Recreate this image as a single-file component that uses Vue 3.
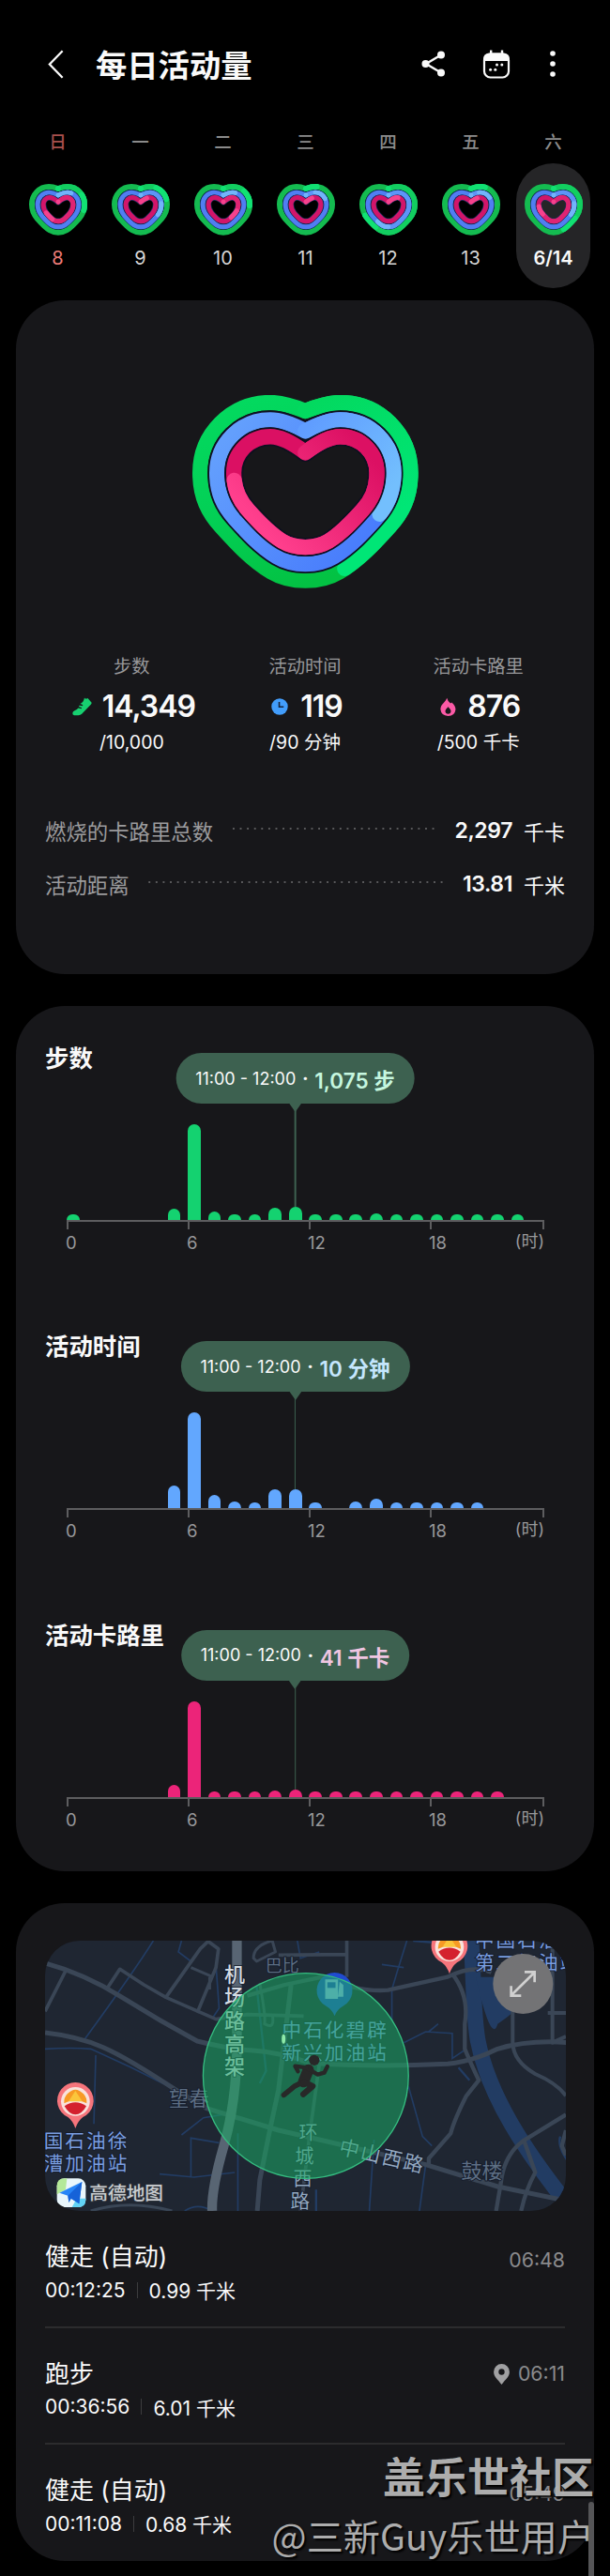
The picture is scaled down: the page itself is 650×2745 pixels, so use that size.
<template>
  <div class="DailyPage">
    <header class="TopBar">
      <svg class="IconBack" viewBox="0 0 20 34"><path d="M17.5 2 3 17 17.5 32" /></svg>
      <h1>每日活动量</h1>
      <svg class="IconShare" viewBox="0 0 26 28">
        <path d="M21 4.5 5 14l16 9.5" />
        <circle cx="21" cy="4.5" r="4" /><circle cx="4.5" cy="14" r="4" /><circle cx="21" cy="23.5" r="4" />
      </svg>
      <svg class="IconCalendar" viewBox="0 0 30 31">
        <rect x="2" y="4.5" width="26" height="25" rx="6.5" class="frame" />
        <path d="M1 12V10Q1 3.5 8 3.5H22Q29 3.5 29 10V12Z" />
        <rect x="8" y="0.5" width="2.4" height="6" /><rect x="19.8" y="0.5" width="2.4" height="6" />
        <circle cx="15.5" cy="16" r="1.5" /><circle cx="20.8" cy="16" r="1.5" />
        <circle cx="8.6" cy="21.3" r="1.5" /><circle cx="13.8" cy="21.3" r="1.5" />
      </svg>
      <svg class="IconMore" viewBox="0 0 6 28"><circle cx="3" cy="3" r="2.8" /><circle cx="3" cy="14" r="2.8" /><circle cx="3" cy="25" r="2.8" /></svg>
    </header>

    <div class="WeekBar">
      <div class="WeekDay" v-for="(day, dayIndex) in arrayWeek" v-bind:key="'Day-' + dayIndex"
      v-bind:class="{ isSunday: dayIndex == 0, isActive: dayIndex == numCurrentDay }" v-on:click="numCurrentDay = dayIndex">
        <p class="WeekName">{{ day.name }}</p>
        <div class="WeekPill">
          <svg class="SmallHeart" viewBox="90 77 187 166" preserveAspectRatio="none">
            <g v-for="(ring, ringIndex) in arraySmallRing" v-bind:key="'Ring-' + ringIndex">
              <path v-bind:d="ring.d" class="ringEdge" v-bind:stroke-width="ring.width + 4" />
              <path v-bind:d="ring.d" v-bind:stroke="ring.base" v-bind:stroke-width="ring.width" />
              <path v-bind:d="ring.d" v-bind:stroke="ring.mid" v-bind:stroke-width="ring.width" pathLength="100"
              v-bind:stroke-dasharray="day.rings[ringIndex] + ' 200'" stroke-linecap="round" />
              <path v-bind:d="ring.d" v-bind:stroke="ring.head" v-bind:stroke-width="ring.width" pathLength="100"
              v-bind:stroke-dasharray="getHeadDash(day.rings[ringIndex])" stroke-linecap="round" />
            </g>
          </svg>
          <span class="WeekDate">{{ day.date }}</span>
        </div>
      </div>
    </div>

    <section class="Card CardSummary">
      <svg class="BigHeart" viewBox="105 93 723 619">
        <defs>
          <linearGradient id="greenBase" gradientUnits="userSpaceOnUse" x1="300" y1="100" x2="460" y2="700"><stop offset="0" stop-color="#03d95f" /><stop offset="0.55" stop-color="#03cf55" /><stop offset="1" stop-color="#03c243" /></linearGradient>
          <linearGradient id="greenTop" gradientUnits="userSpaceOnUse" x1="466" y1="130" x2="720" y2="500"><stop offset="0" stop-color="#03d95f" /><stop offset="1" stop-color="#00e676" /></linearGradient>
          <linearGradient id="blueBase" gradientUnits="userSpaceOnUse" x1="200" y1="250" x2="640" y2="600"><stop offset="0" stop-color="#639ffd" /><stop offset="1" stop-color="#487cfc" /></linearGradient>
          <linearGradient id="blueTop" gradientUnits="userSpaceOnUse" x1="466" y1="200" x2="720" y2="420"><stop offset="0" stop-color="#609dff" /><stop offset="1" stop-color="#73bffd" /></linearGradient>
          <linearGradient id="pinkTop" gradientUnits="userSpaceOnUse" x1="640" y1="250" x2="330" y2="520"><stop offset="0" stop-color="#dc1063" /><stop offset="1" stop-color="#ff3f8d" /></linearGradient>
        </defs>
        <g v-for="(ring, ringIndex) in arrayBigRing" v-bind:key="'Big-' + ringIndex">
          <path v-bind:d="ring.d" class="ringEdge" stroke-width="60" />
          <path v-bind:d="ring.d" v-bind:stroke="ring.base" stroke-width="49" />
          <path v-bind:d="ring.d" v-bind:stroke="ring.top" stroke-width="49" pathLength="100"
          v-bind:stroke-dasharray="ring.percent + ' 200'" stroke-linecap="round" />
        </g>
      </svg>

      <div class="StatRow">
        <div class="StatItem">
          <p class="StatName">步数</p>
          <p class="StatValue">
            <svg class="IconStat shoe" viewBox="0 0 21 20">
              <path d="M13 .4Q14.2 2.4 16.5 1L20.6 5.8Q20.8 6.8 19.8 7.8L10.2 17.8Q8.8 19.2 6.5 19.3H2Q.2 19.1.3 17Q.5 14.8 2.5 14.2Q5.2 13.4 6.4 11.6L9.8 12.3 10 11.2 7 10.1 7.6 8.8 11 9.2 11.2 8.1 8.4 6.9Q12 5.4 13 .4Z" fill="#17d070" />
            </svg>14,349
          </p>
          <p class="StatTarget">/10,000</p>
        </div>
        <div class="StatItem">
          <p class="StatName">活动时间</p>
          <p class="StatValue">
            <svg class="IconStat clock" viewBox="0 0 19 19"><circle cx="9.5" cy="9.5" r="9.2" fill="#429dfb" /><path d="M9 4.2V9.8H14" fill="none" stroke="#15233c" stroke-width="1.7" /></svg>119
          </p>
          <p class="StatTarget">/90 分钟</p>
        </div>
        <div class="StatItem">
          <p class="StatName">活动卡路里</p>
          <p class="StatValue">
            <svg class="IconStat flame" viewBox="0 0 18 21">
              <path d="M7.6.3Q8.4 3.6 11.4 6Q12.2 6.4 12.9 5.2Q17.6 9 17.4 13.3Q16.6 20.3 9 20.6Q1 20.2.4 13Q.4 9 4.2 5.6Q6.9 3.2 7.6.3ZM9 10.2Q6 13 5.8 15Q6 18 9 18.2Q12 18 12.2 15Q12 13 9 10.2Z" fill="#fb5aa6" fill-rule="evenodd" />
            </svg>876
          </p>
          <p class="StatTarget">/500 千卡</p>
        </div>
      </div>

      <div class="TotalRow" v-for="item in arrayTotal" v-bind:key="item.name">
        <span class="TotalName">{{ item.name }}</span>
        <i class="TotalDots"></i>
        <b class="TotalValue">{{ item.value }}</b>
        <span class="TotalUnit">{{ item.unit }}</span>
      </div>
    </section>

    <section class="Card CardChart">
      <div class="ChartItem" v-for="chart in arrayChart" v-bind:key="chart.name">
        <h2>{{ chart.name }}</h2>
        <div class="ChartPlot">
          <i class="ChartBar" v-for="(numHeight, hour) in chart.bars" v-bind:key="chart.name + hour"
          v-bind:style="{ height: numHeight + 'px', backgroundColor: chart.color }"></i>
        </div>
        <div class="ChartTicks"><i v-for="numTick in 5" v-bind:key="'Tick-' + numTick"></i></div>
        <div class="ChartLabels"><span>0</span><span>6</span><span>12</span><span>18</span><span class="hourUnit">(时)</span></div>
        <div class="ChartTip">
          <span class="TipRange">11:00 - 12:00</span><span class="TipDot">·</span><b v-bind:style="{ color: chart.tipColor }">{{ chart.tip }}</b>
          <i class="TipLine" v-bind:style="{ height: 124 - chart.bars[11] + 'px' }"></i>
        </div>
      </div>
    </section>

    <section class="Card CardRecord">
      <div class="MapBox">
        <svg class="MapCanvas" viewBox="54 84 1664 864" preserveAspectRatio="none">
          <rect x="54" y="84" width="1664" height="864" fill="#1f2632" />
          <!-- 河道 -->
          <g fill="none" stroke="#223c63">
            <path d="M1415 84C1425 200 1420 300 1436 400 C1470 580 1590 760 1730 935" stroke-width="50" />
            <path d="M1430 200Q1480 420 1500 350Q1560 310 1600 260V200Z" fill="#223c63" stroke="none" />
            <path d="M54 430Q140 425 200 430L330 490 470 560M400 84Q340 180 180 400" stroke-width="5" />
            <path d="M216 450L210 670M490 84L480 120 520 150M600 160L610 300 590 330M490 705L560 650 620 640M420 830L530 840 660 825M520 840V715L610 730M670 700V948M500 948Q540 920 590 948" stroke-width="5" />
            <path d="M860 84L870 140 930 120M1210 84L1180 180 1162 240V340M1130 160L1200 170M1215 550L1260 710 1290 740M1105 720L1090 948M1270 800L1250 948M1200 410L1270 375 1355 380V460L1400 430M1280 375L1310 350" stroke-width="5" />
            <path d="M1230 84L1300 90M1375 490L1410 530M1700 710Q1690 740 1725 790M920 880V948M740 540L760 500 730 230" stroke-width="7" />
          </g>
          <!-- 道路 -->
          <g fill="none" stroke="#3a4656" stroke-linejoin="round">
            <path d="M54 156Q180 190 300 265T540 405Q640 430 720 435T900 475Q1100 490 1340 478Q1420 470 1500 430Q1600 400 1730 410" stroke-width="15" />
            <path d="M54 378Q160 390 240 425T470 560L570 620 800 690 930 720 1270 800 1500 870 1718 915" stroke-width="15" />
            <path d="M120 180L54 310M250 240L293 175 370 225 440 265 600 335 700 320 880 325M440 265L550 110 575 86 608 110 600 170 540 315" stroke-width="11" />
            <path d="M700 260L820 225 940 200Q1060 250 1150 242L1340 200Q1420 160 1480 185" stroke-width="13" />
            <path d="M840 225L825 350 800 560 770 700 740 850 732 948" stroke-width="15" />
            <path d="M1018 84V200M930 480L900 700 870 948M800 130L1018 128" stroke-width="11" />
            <path d="M1355 190Q1410 260 1395 350V430Q1420 490 1440 530L1400 580Q1360 660 1350 700L1280 780V800" stroke-width="13" />
            <path d="M1548 310V410Q1550 470 1620 510Q1690 540 1718 580M1675 84V410L1718 390M1660 315H1718" stroke-width="12" />
            <path d="M1718 640L1580 725Q1520 770 1510 860L1495 948M1585 725L1620 825Q1590 880 1575 948M1718 690L1705 740 1718 770" stroke-width="13" />
            <path d="M200 948Q320 910 460 948M520 170L590 200M580 200V240M720 140Q720 100 780 84L790 120 730 150ZM740 220Q760 330 755 350Q790 370 780 320" stroke-width="9" />
          </g>
          <path d="M667 84V430Q665 600 625 740T588 948" fill="none" stroke="#586573" stroke-width="31" />
          <g class="MapText">
            <text class="grey" x="758" y="184" font-size="54">巴比</text>
            <text class="grey" x="450" y="612" font-size="64">望春</text>
            <text class="grey" x="1384" y="842" font-size="66">鼓楼</text>
            <text class="pale" v-for="(strChar, charIndex) in '机场路高架'" v-bind:key="strChar" x="627" v-bind:y="215 + charIndex * 74" font-size="66">{{ strChar }}</text>
            <text class="blue" x="811" y="392" font-size="62" letter-spacing="6">中石化碧辟</text>
            <text class="blue" x="811" y="464" font-size="62" letter-spacing="6">新兴加油站</text>
            <text class="road" x="865" y="720" font-size="60">环</text>
            <text class="road" x="853" y="795" font-size="60">城</text>
            <text class="road" x="847" y="867" font-size="60">西</text>
            <text class="road" x="838" y="939" font-size="62">路</text>
            <text class="road" x="990" y="764" font-size="64" letter-spacing="6" transform="rotate(13 990 764)">中山西路</text>
            <text class="blue" x="50" y="748" font-size="62" letter-spacing="6">国石油徐</text>
            <text class="blue" x="50" y="818" font-size="62" letter-spacing="6">漕加油站</text>
            <text class="blue" x="1427" y="106" font-size="62" letter-spacing="6">中国石油</text>
            <text class="blue" x="1427" y="176" font-size="62" letter-spacing="6">第二加油站</text>
          </g>
          <!-- 加油站标记 -->
          <path d="M979 325Q972 305 950 292A57 57 0 1 1 1008 292Q986 305 979 325Z" fill="#204bd0" />
          <path d="M949 208H990V270H949ZM995 215L1007 226V263H990" fill="#8eb9ff" />
          <rect x="956" y="217" width="26" height="18" fill="#204bd0" />
          <g v-for="pin in arrayPin" v-bind:key="pin" v-bind:transform="pin">
            <path d="M0 86Q-8 62-24 50A58 58 0 1 1 24 50Q8 62 0 86Z" fill="#f6757c" />
            <circle r="46" fill="#f9e2dc" />
            <path d="M-36 6A38 38 0 0 1-26-24Q0-52 26-24A38 38 0 0 1 36 6L0-9Z" fill="#f79a25" />
            <path d="M-22 0L0-34 22 0Z" fill="#fbc63b" />
            <path d="M-35 15Q0-10 35 15Q20 42 0 42T-35 15Z" fill="#d4212e" />
          </g>
          <circle cx="887" cy="516" r="328" fill="#1aa764" fill-opacity="0.56" stroke="#35bd80" stroke-width="4" />
          <ellipse cx="816" cy="398" rx="6" ry="15" fill="#8de9a8" />
          <!-- 跑步的人 -->
          <circle cx="914" cy="466" r="17" fill="#282828" />
          <g fill="none" stroke="#282828" stroke-linecap="round" stroke-linejoin="round">
            <path d="M895 497L880 535" stroke-width="36" />
            <path d="M893 493L925 512 946 506 956 486" stroke-width="13" />
            <path d="M890 490L853 485 862 502" stroke-width="13" />
            <path d="M874 538L850 550 817 577" stroke-width="17" />
            <path d="M882 536L909 549 879 575" stroke-width="19" />
          </g>
          <!-- 高德标识 -->
          <rect x="92" y="844" width="92" height="92" rx="24" fill="#e9f6fb" />
          <path d="M92 890V868Q92 844 116 844H124L120 880 92 895Z" fill="#b4e999" />
          <path d="M140 936L155 908H184V912Q184 936 160 936Z" fill="#62d3f5" />
          <path d="M100 890L172 855 163 925 137 908 130 921 127 899Z" fill="#2785f7" />
          <path d="M172 855L127 899 130 921 137 908 163 925Z" fill="#1662d8" />
          <text class="MapLogo" x="196" y="912" font-size="59">高德地图</text>
          <g fill="none">
            <circle cx="1581" cy="222" r="96" fill="#737375" />
            <path d="M1544 258L1617 186M1586 184H1618V217M1543 229V260H1575" stroke="#d0d0d0" stroke-width="8" />
          </g>
        </svg>
      </div>
      <div class="RecordRow" v-for="(record, recordIndex) in arrayRecord" v-bind:key="'Record-' + recordIndex" v-bind:class="{ hasPin: record.pin }">
        <div class="RecordMain">
          <p class="RecordName">{{ record.name }}</p>
          <p class="RecordInfo"><span>{{ record.duration }}</span><i></i><span>{{ record.distance }}</span></p>
        </div>
        <div class="RecordTime">
          <svg v-if="record.pin" viewBox="0 0 17 22"><path d="M8.5 0A8.4 8.4 0 0 0 .1 8.5C.1 13.5 4 16 8.5 22C13 16 16.9 13.5 16.9 8.5A8.4 8.4 0 0 0 8.5 0ZM8.5 5.3A3.2 3.2 0 1 1 8.5 11.7A3.2 3.2 0 1 1 8.5 5.3Z" fill="#a0a0a2" fill-rule="evenodd" /></svg>
          {{ record.time }}
        </div>
      </div>
    </section>

    <div class="PageMark">
      <p class="MarkName">盖乐世社区</p>
      <p class="MarkUser">@三新Guy乐世用户</p>
    </div>
    <i class="ScrollThumb"></i>
  </div>
</template>

<script setup>
  import { ref } from 'vue';

  // 当前选中的日期
  let numCurrentDay = ref(6);

  // 生成心形路径，cx 中心，hw 半宽，tx 顶点偏移
  function getHeartPath(cx, hw, tx, top, notch, mid, bottom) {
    const up = notch - top,
          down = bottom - mid;
    const arrayPoint = [
      [0.18 * tx, notch - 0.3 * up], [0.6 * tx, top], [tx, top],
      [tx + 0.56 * (hw - tx), top], [hw, mid - 0.55 * (mid - top)], [hw, mid],
      [hw, mid + 0.226 * down], [0.92 * hw, mid + 0.37 * down], [0.8 * hw, mid + 0.5 * down],
      [0.665 * hw, mid + 0.646 * down], [0.516 * hw, mid + 0.806 * down], [0.323 * hw, mid + 0.92 * down],
      [0.22 * hw, mid + 0.98 * down], [0.116 * hw, bottom], [0, bottom]
    ];
    const arrayAll = [[0, notch]].concat(arrayPoint);
    const arrayLeft = arrayAll.slice(0, -1).reverse().map((item) => [-item[0], item[1]]);
    const str = (list) => list.map((item) => (cx + item[0]).toFixed(1) + ' ' + item[1].toFixed(1)).join(' ');
    return 'M' + cx + ' ' + notch + 'C' + str(arrayPoint) + ' ' + str(arrayLeft) + 'Z';
  }
  // 进度末端高亮的一小段
  function getHeadDash(numPercent) {
    const numStart = Math.max(numPercent - 10, 0);
    return '0 ' + numStart + ' ' + (numPercent - numStart) + ' 200';
  }

  const arrayBigRing = [
    { d: getHeartPath(466, 337, 112, 117, 144, 342, 687), base: 'url(#greenBase)', top: 'url(#greenTop)', percent: 43.2 },
    { d: getHeartPath(466, 283, 112, 172, 208, 342, 634), base: 'url(#blueBase)', top: 'url(#blueTop)', percent: 32 },
    { d: getHeartPath(466, 229, 112, 226, 277, 342, 580), base: '#db1063', top: 'url(#pinkTop)', percent: 75 }
  ];
  const arraySmallRing = [
    { d: getHeartPath(183.5, 84.5, 30, 86, 92, 143, 233), width: 18, base: '#14bb50', mid: '#12ce60', head: '#11e173' },
    { d: getHeartPath(183.5, 66, 30, 104.5, 113, 143, 215), width: 15, base: '#507ef2', mid: '#5d94f7', head: '#72b4fa' },
    { d: getHeartPath(183.5, 48, 28, 121, 135, 143, 197), width: 15, base: '#d2156a', mid: '#df2473', head: '#f5428d' }
  ];
  const arrayWeek = [
    { name: '日', date: '8', rings: [27, 11, 67] },
    { name: '一', date: '9', rings: [20, 32, 8] },
    { name: '二', date: '10', rings: [24, 10, 40] },
    { name: '三', date: '11', rings: [7, 18, 8] },
    { name: '四', date: '12', rings: [69, 60, 12] },
    { name: '五', date: '13', rings: [9, 17, 8] },
    { name: '六', date: '6/14', rings: [43, 32, 75] }
  ];
  const arrayTotal = [
    { name: '燃烧的卡路里总数', value: '2,297', unit: '千卡' },
    { name: '活动距离', value: '13.81', unit: '千米' }
  ];
  // 每小时柱子高度
  const arrayChart = [
    { name: '步数', color: '#14d270', tipColor: '#c5f6df', tip: '1,075 步',
      bars: [6, 0, 0, 0, 0, 12, 102, 9, 6, 6, 13, 14, 6, 6, 6, 7, 6, 6, 6, 6, 6, 6, 6, 0] },
    { name: '活动时间', color: '#62a7fe', tipColor: '#c4e6fd', tip: '10 分钟',
      bars: [0, 0, 0, 0, 0, 24, 102, 14, 7, 6, 20, 20, 6, 0, 7, 10, 6, 6, 6, 6, 6, 0, 0, 0] },
    { name: '活动卡路里', color: '#ec2479', tipColor: '#f0c6e2', tip: '41 千卡',
      bars: [0, 0, 0, 0, 0, 13, 102, 6, 6, 6, 7, 8, 6, 6, 6, 6, 6, 6, 6, 6, 6, 6, 0, 0] }
  ];
  const arrayPin = ['translate(151 598)', 'translate(1346 104)'];
  const arrayRecord = [
    { name: '健走 (自动)', duration: '00:12:25', distance: '0.99 千米', time: '06:48', pin: false },
    { name: '跑步', duration: '00:36:56', distance: '6.01 千米', time: '06:11', pin: true },
    { name: '健走 (自动)', duration: '00:11:08', distance: '0.68 千米', time: '05:49', pin: false }
  ];
</script>

<style>
  body {
    background-color: #000;
  }
</style>

<style scoped>
  * {
    margin: 0;
    padding: 0;
    box-sizing: border-box;
  }
  svg {
    display: block;
    flex-shrink: 0;
  }
  .DailyPage {
    position: relative;
    width: 650px;
    height: 2745px;
    overflow: hidden;
    background-color: #000;
    color: #fafafa;
    font-family: Inter, "Noto Sans CJK SC", sans-serif;
    white-space: nowrap;
  }
  .TopBar {
    display: flex;
    align-items: center;
    height: 136px;
    padding: 0 58px 0 50px;
  }
  .TopBar h1 {
    flex: 1;
    margin-left: 33px;
    padding-top: 4px;
    font-size: 33.3px;
    line-height: 44px;
    font-weight: 600;
  }
  .IconBack {
    width: 19px;
    height: 33px;
    fill: none;
    stroke: #fafafa;
    stroke-width: 2.4;
  }
  .IconShare {
    width: 26px;
    height: 28px;
    fill: #fafafa;
  }
  .IconShare path {
    fill: none;
    stroke: #fafafa;
    stroke-width: 2.4;
  }
  .IconCalendar {
    width: 30px;
    height: 31px;
    margin-left: 39px;
    fill: #fafafa;
  }
  .IconCalendar .frame {
    fill: none;
    stroke: #fafafa;
    stroke-width: 2.2;
  }
  .IconMore {
    width: 6px;
    height: 28px;
    margin-left: 42px;
    fill: #fafafa;
  }

  .WeekBar {
    display: flex;
    justify-content: space-between;
    padding: 0 21px 0 22px;
  }
  .WeekDay {
    width: 79px;
    text-align: center;
  }
  .WeekName {
    height: 30px;
    line-height: 30px;
    font-size: 18.5px;
    font-weight: 500;
    color: #8b8b8b;
  }
  .WeekPill {
    display: flex;
    flex-direction: column;
    align-items: center;
    height: 133px;
    margin-top: 8px;
    padding-top: 22px;
    border-radius: 40px;
  }
  .isActive .WeekPill {
    background-color: #252527;
  }
  .SmallHeart {
    width: 62px;
    height: 55px;
  }
  .SmallHeart path, .BigHeart path {
    fill: none;
    stroke-linejoin: round;
  }
  .SmallHeart .ringEdge {
    stroke: #14305a;
  }
  .BigHeart .ringEdge {
    stroke: #0e1020;
  }
  .BigHeart g:first-of-type .ringEdge, .SmallHeart g:first-of-type .ringEdge {
    stroke: none;
  }
  .WeekDate {
    margin-top: 10px;
    line-height: 28px;
    font-size: 20px;
    color: #d6d6d6;
  }
  .isSunday .WeekName {
    color: #a8504d;
  }
  .isSunday .WeekDate {
    color: #ee7c78;
  }
  .isActive .WeekDate {
    font-weight: 600;
    color: #fafafa;
  }

  .Card {
    width: 616px;
    margin: 34px auto 0 17px;
    padding: 0 31px;
    border-radius: 52px;
    background-color: #17171a;
  }
  .CardSummary {
    height: 718px;
    margin-top: 13px;
    padding-top: 101px;
  }
  .BigHeart {
    width: 241px;
    height: 206px;
    margin: 0 auto;
  }
  .StatRow {
    display: flex;
    margin: 70px 0 51px;
  }
  .StatItem {
    flex: 1;
    display: flex;
    flex-direction: column;
    align-items: center;
  }
  .StatName {
    line-height: 26px;
    font-size: 19.3px;
    color: #98989a;
  }
  .StatValue {
    display: flex;
    align-items: center;
    height: 40px;
    margin-top: 10px;
    padding-left: 4px;
    line-height: 40px;
    font-size: 32px;
    font-weight: 600;
    letter-spacing: -1px;
  }
  .IconStat {
    margin-right: 11px;
  }
  .shoe {
    width: 21px;
    height: 20px;
  }
  .clock {
    width: 18px;
    height: 18px;
    margin-right: 13px;
  }
  .flame {
    width: 17px;
    height: 21px;
    margin-right: 12px;
  }
  .StatTarget {
    height: 28px;
    margin-top: 4px;
    line-height: 28px;
    font-size: 19.5px;
  }
  .TotalRow {
    display: flex;
    align-items: center;
    height: 57px;
  }
  .TotalName {
    font-size: 22.4px;
    color: #9b9b9d;
  }
  .TotalDots {
    flex: 1;
    height: 2px;
    margin: 0 19px 4px 16px;
    background: radial-gradient(circle, #59595b 1px, transparent 1.3px) 100% 0 / 7.6px 2px repeat-x;
  }
  .TotalValue {
    font-size: 23px;
    font-weight: 600;
    letter-spacing: -0.4px;
  }
  .TotalUnit {
    margin-left: 12px;
    font-size: 22px;
  }

  .CardChart {
    height: 922px;
    padding-top: 38px;
  }
  .ChartItem {
    position: relative;
    height: 307.4px;
  }
  .ChartItem h2 {
    height: 36px;
    line-height: 36px;
    font-size: 25.4px;
    font-weight: 600;
  }
  .ChartPlot {
    display: flex;
    align-items: flex-end;
    justify-content: space-between;
    height: 156px;
    margin: 0 22px 0 23px;
    border-bottom: 2px solid #5d5d5f;
  }
  .ChartBar {
    width: 13.7px;
    border-radius: 7px 7px 0 0;
  }
  .ChartTicks {
    display: grid;
    grid-template-columns: repeat(3, 129px) 120px 2px;
    margin-left: 23px;
  }
  .ChartTicks i {
    width: 2px;
    height: 8px;
    background-color: #5d5d5f;
  }
  .ChartLabels {
    display: grid;
    grid-template-columns: repeat(3, 129px) 1fr auto;
    margin: 1px 22px 0 22px;
    line-height: 26px;
    font-size: 18.5px;
    color: #98989a;
  }
  .hourUnit {
    margin-top: -1px;
    font-size: 18px;
  }
  .ChartTip {
    position: absolute;
    left: 266.5px;
    top: 12px;
    display: flex;
    align-items: center;
    height: 54px;
    padding: 0 21px;
    transform: translateX(-50%);
    border-radius: 27px;
    background-color: #3d6150;
  }
  .ChartTip::after {
    content: "";
    position: absolute;
    left: 50%;
    top: 53px;
    margin-left: -7px;
    border: 7px solid transparent;
    border-top: 10px solid #3d6150;
    border-bottom: none;
  }
  .TipRange {
    font-size: 18px;
  }
  .TipDot {
    width: 20px;
    text-align: center;
    font-size: 20px;
    font-weight: 700;
  }
  .ChartTip b {
    padding-top: 2px;
    font-size: 22.5px;
    font-weight: 600;
  }
  .TipLine {
    position: absolute;
    left: 50%;
    top: 54px;
    width: 1.5px;
    margin-left: -0.7px;
    background-color: #3d6150;
  }

  .CardRecord {
    height: 701px;
    padding-top: 40px;
  }
  .MapBox {
    width: 555px;
    height: 288px;
    overflow: hidden;
    border-radius: 37px;
  }
  .MapCanvas {
    width: 555px;
    height: 288px;
  }
  .MapText text {
    stroke: #141b2b;
    stroke-width: 5;
    paint-order: stroke;
  }
  .MapText .grey {
    fill: #5d6e83;
  }
  .MapText .pale {
    fill: #d3dbe2;
    font-weight: 500;
  }
  .MapText .blue {
    fill: #7a9ee0;
  }
  .MapText .road {
    fill: #93a8c0;
  }
  .MapLogo {
    fill: #c9ccd0;
    stroke: #30353c;
    stroke-width: 5;
    paint-order: stroke;
    font-weight: 500;
  }
  .RecordRow {
    display: flex;
    justify-content: space-between;
    height: 124.5px;
    padding-top: 31px;
    border-bottom: 2px solid #2c2c2e;
  }
  .RecordRow:last-child {
    border-bottom: none;
  }
  .RecordName {
    line-height: 36px;
    font-size: 26px;
  }
  .RecordInfo {
    display: flex;
    align-items: center;
    height: 30px;
    margin-top: 2px;
    font-size: 21px;
  }
  .RecordInfo i {
    width: 1px;
    height: 17px;
    margin: 0 12px;
    background-color: #3c3c3e;
  }
  .RecordTime {
    display: flex;
    height: 30px;
    margin-top: 6px;
    line-height: 30px;
    font-size: 21.3px;
    color: #8a8a8c;
  }
  .hasPin .RecordTime {
    margin-top: 2px;
  }
  .RecordTime svg {
    width: 17px;
    height: 22px;
    margin: 5px 9px 0 0;
  }

  .PageMark {
    position: absolute;
    right: 17px;
    bottom: 13px;
    text-align: right;
    color: rgba(184, 184, 184, 0.94);
    text-shadow: 2px 2px 2px #000;
  }
  .MarkName {
    line-height: 58px;
    font-size: 45px;
    font-weight: 700;
  }
  .MarkUser {
    line-height: 62px;
    font-size: 39.2px;
    font-family: "Noto Sans CJK SC", sans-serif;
  }
  .ScrollThumb {
    position: absolute;
    right: 17px;
    bottom: -8px;
    width: 6px;
    height: 87px;
    border-radius: 3px;
    background-color: #555557;
  }
</style>
